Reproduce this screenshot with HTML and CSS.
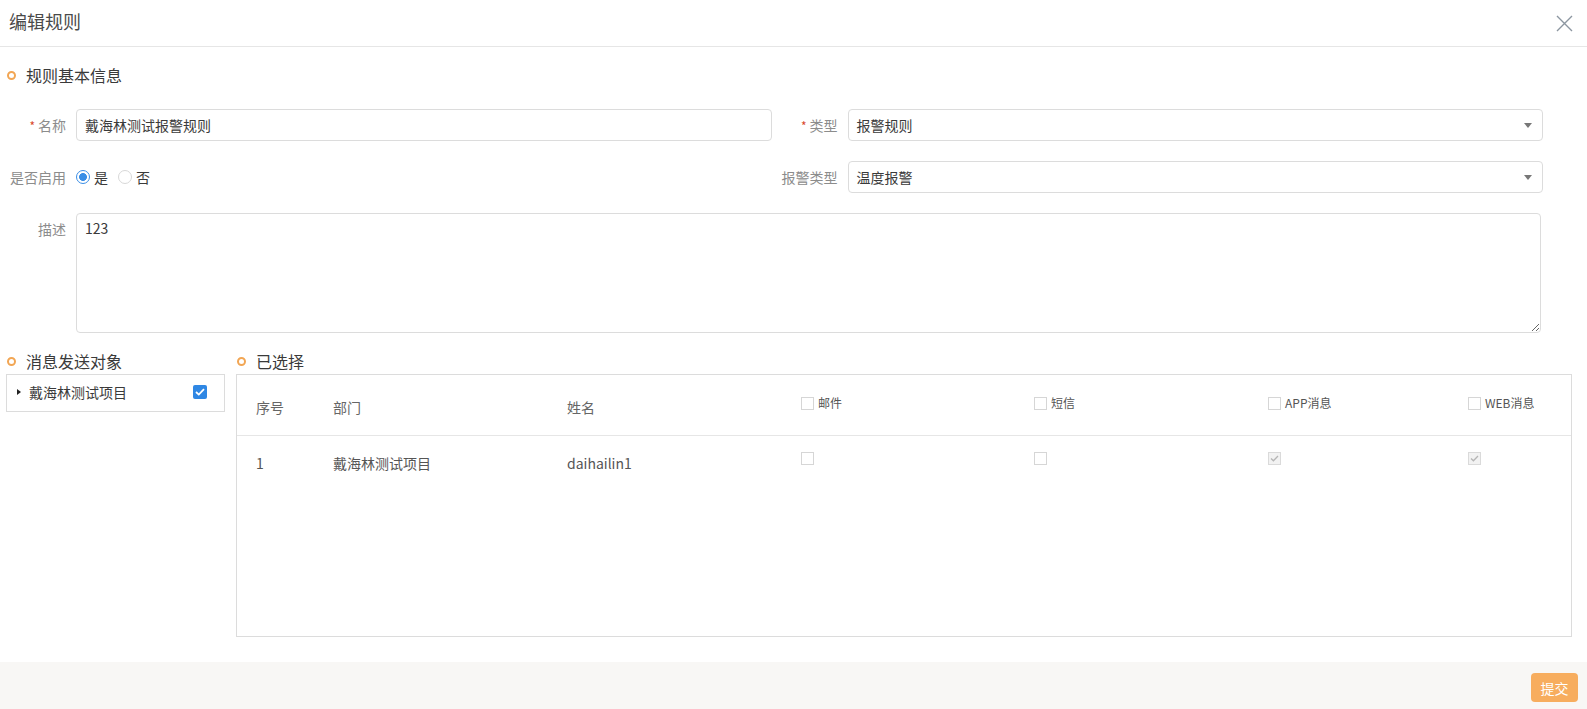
FILE: index.html
```html
<!DOCTYPE html>
<html lang="zh-CN">
<head>
<meta charset="utf-8">
<title>编辑规则</title>
<link rel="stylesheet" href="styles.css">
</head>
<body>
<div class="dialog">
  <header class="dlg-head">
    <span class="dlg-title">编辑规则</span>
    <button class="close" aria-label="关闭">
      <svg width="17" height="17" viewBox="0 0 17 17"><path d="M1 1L16 16M16 1L1 16" stroke="#8c96a0" stroke-width="1.4" fill="none"/></svg>
    </button>
  </header>

  <main class="dlg-body">
    <div class="sec-title"><i class="dot"></i>规则基本信息</div>

    <div class="form-grid">
      <div class="field">
        <label class="lbl"><em>*</em>名称</label>
        <div class="input">戴海林测试报警规则</div>
      </div>
      <div class="field">
        <label class="lbl"><em>*</em>类型</label>
        <div class="input select">报警规则<i class="caret"></i></div>
      </div>
      <div class="field">
        <label class="lbl">是否启用</label>
        <div class="radios">
          <span class="radio on"></span><span class="rtext">是</span>
          <span class="radio"></span><span class="rtext">否</span>
        </div>
      </div>
      <div class="field">
        <label class="lbl">报警类型</label>
        <div class="input select">温度报警<i class="caret"></i></div>
      </div>
      <div class="field full">
        <label class="lbl top">描述</label>
        <textarea class="area">123</textarea>
      </div>
    </div>

    <div class="lower">
      <section class="left-panel">
        <div class="sec-title small"><i class="dot"></i>消息发送对象</div>
        <div class="tree">
          <i class="tri"></i>
          <span class="tree-text">戴海林测试项目</span>
          <span class="chk-blue">
            <svg width="10" height="8" viewBox="0 0 10 8"><path d="M1 4L3.8 6.6L9 1.2" stroke="#fff" stroke-width="1.8" fill="none"/></svg>
          </span>
        </div>
      </section>

      <section class="right-panel">
        <div class="sec-title small"><i class="dot"></i>已选择</div>
        <div class="table">
          <div class="row head">
            <div class="cell txt">序号</div>
            <div class="cell txt">部门</div>
            <div class="cell txt">姓名</div>
            <div class="cell cb"><span class="box"></span><span class="cbl">邮件</span></div>
            <div class="cell cb"><span class="box"></span><span class="cbl">短信</span></div>
            <div class="cell cb"><span class="box"></span><span class="cbl">APP消息</span></div>
            <div class="cell cb"><span class="box"></span><span class="cbl">WEB消息</span></div>
          </div>
          <div class="row body">
            <div class="cell">1</div>
            <div class="cell">戴海林测试项目</div>
            <div class="cell">daihailin1</div>
            <div class="cell"><span class="box"></span></div>
            <div class="cell"><span class="box"></span></div>
            <div class="cell"><span class="box dis"><svg width="9" height="7" viewBox="0 0 9 7"><path d="M1 3.5L3.4 5.8L8 1" stroke="#b5b5b5" stroke-width="1.3" fill="none"/></svg></span></div>
            <div class="cell"><span class="box dis"><svg width="9" height="7" viewBox="0 0 9 7"><path d="M1 3.5L3.4 5.8L8 1" stroke="#b5b5b5" stroke-width="1.3" fill="none"/></svg></span></div>
          </div>
        </div>
      </section>
    </div>
  </main>

  <footer class="dlg-foot">
    <button class="submit">提交</button>
  </footer>
</div>
</body>
</html>
```

FILE: styles.css
```css
* { box-sizing: border-box; }
html, body { margin: 0; padding: 0; }
body {
  font-family: "Noto Sans CJK SC", "Noto Sans", sans-serif;
  font-size: 14px;
  color: #333;
  background: #fff;
}
.dialog {
  width: 1587px;
  height: 709px;
  display: flex;
  flex-direction: column;
}
.dlg-head {
  height: 47px;
  border-bottom: 1px solid #e6e6e6;
  display: flex;
  align-items: center;
  justify-content: space-between;
  padding: 0 14px 4px 9px;
}
.dlg-title {
  font-size: 18px;
  line-height: 24px;
  color: #4a4a4a;
}
.close {
  border: 0;
  background: none;
  padding: 0;
  width: 17px;
  height: 17px;
  display: block;
  margin-top: 4px;
}
.close svg { display: block; }
.dlg-body {
  flex: 1;
}
.sec-title {
  display: flex;
  align-items: center;
  font-size: 16px;
  line-height: 20px;
  color: #3a3a3a;
  margin: 18px 0 0 7px;
}
.dot {
  width: 9px;
  height: 9px;
  border: 2px solid #f2a654;
  border-radius: 50%;
  margin-right: 10px;
  flex: none;
}
.form-grid {
  width: 1543px;
  margin-top: 24px;
  display: grid;
  grid-template-columns: 1fr 1fr;
  row-gap: 20px;
}
.field {
  display: flex;
  align-items: center;
}
.field.full {
  grid-column: 1 / 3;
  align-items: flex-start;
}
.lbl {
  width: 66px;
  margin-right: 10px;
  text-align: right;
  color: #8c8c8c;
  line-height: 20px;
  flex: none;
  white-space: nowrap;
}
.lbl em {
  font-style: normal;
  color: #d9482b;
  font-size: 12px;
  margin-right: 3px;
}
.lbl.top { margin-top: 6px; }
.input {
  flex: 1;
  height: 32px;
  border: 1px solid #dcdcdc;
  border-radius: 4px;
  padding: 0 8px;
  line-height: 30px;
  color: #3a3a3a;
  display: flex;
  align-items: center;
  justify-content: space-between;
}
.caret {
  width: 0;
  height: 0;
  border-left: 4.5px solid transparent;
  border-right: 4.5px solid transparent;
  border-top: 5px solid #777;
  margin-right: 2px;
}
.radios {
  display: flex;
  align-items: center;
  height: 32px;
}
.radio {
  width: 14px;
  height: 14px;
  border-radius: 50%;
  border: 1px solid #d8d8d8;
  background: #fff;
}
.radio.on {
  border-color: #3a8ee6;
  background: radial-gradient(circle, #3a8ee6 0 3.6px, #fff 4.3px);
}
.rtext {
  margin: 0 10px 0 4px;
  color: #3a3a3a;
  line-height: 20px;
}
.area {
  flex: 1;
  margin-right: 2px;
  height: 120px;
  border: 1px solid #dcdcdc;
  border-radius: 4px;
  padding: 4px 8px;
  font-family: inherit;
  font-size: 14px;
  line-height: 20px;
  color: #3a3a3a;
  resize: vertical;
  outline: none;
}
.lower {
  display: flex;
  margin-top: 18px;
}
.sec-title.small { margin: 0 0 3px 1px; }
.left-panel {
  width: 219px;
  margin-left: 6px;
}
.tree {
  height: 38px;
  border: 1px solid #dcdcdc;
  display: flex;
  align-items: center;
  padding: 0 17px 0 10px;
}
.tri {
  width: 0;
  height: 0;
  border-top: 3.5px solid transparent;
  border-bottom: 3.5px solid transparent;
  border-left: 4px solid #222;
  margin-right: 8px;
  margin-top: -3px;
}
.tree-text {
  flex: 1;
  line-height: 20px;
  color: #3a3a3a;
  margin-top: -2px;
}
.chk-blue {
  width: 14px;
  height: 14px;
  border-radius: 2px;
  background: #2f87e4;
  display: flex;
  align-items: center;
  justify-content: center;
  margin-top: -2px;
}
.chk-blue svg { display: block; }
.right-panel {
  width: 1336px;
  margin-left: 11px;
}
.table {
  height: 263px;
  border: 1px solid #dcdcdc;
}
.row {
  display: grid;
  grid-template-columns: 77px 234px 234px 233px 234px 200px 1fr;
  padding-left: 19px;
}
.row.head {
  height: 61px;
  border-bottom: 1px solid #e6e6e6;
  align-items: center;
}
.row.body {
  padding-top: 16px;
  align-items: start;
}
.cell {
  line-height: 22px;
  color: #555;
  display: flex;
  align-items: center;
}
.head .txt { padding-top: 4px; color: #666; }
.head .cb { padding-bottom: 4px; }
.box {
  width: 13px;
  height: 13px;
  border: 1px solid #d6d6d6;
  background: #fff;
  flex: none;
  display: flex;
  align-items: center;
  justify-content: center;
}
.body .box { margin-top: 0; align-self: flex-start; }
.box.dis { background: #f2f2f2; border-color: #dadada; }
.box svg { display: block; }
.cbl {
  font-size: 12px;
  color: #555;
  margin-left: 4px;
  line-height: 18px;
}
.dlg-foot {
  height: 47px;
  background: #f8f7f5;
  display: flex;
  justify-content: flex-end;
  align-items: flex-start;
  padding: 11px 9px 0 0;
}
.submit {
  width: 47px;
  height: 29px;
  border: 0;
  border-radius: 4px;
  background: #f7ad5e;
  color: #fff;
  font-family: inherit;
  font-size: 14px;
  padding: 0;
}
```
